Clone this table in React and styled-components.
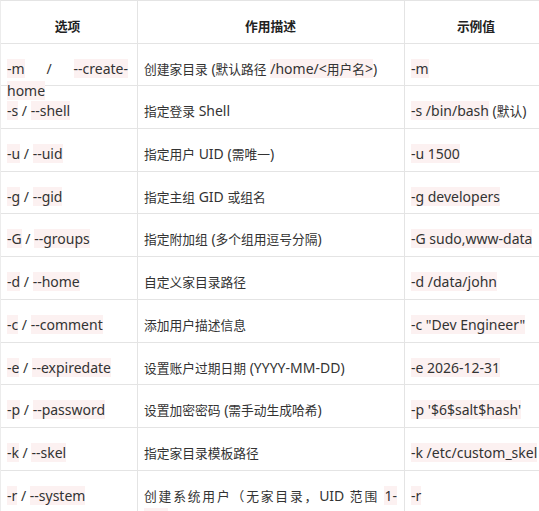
import React from "react";
import styled, { createGlobalStyle } from "styled-components";

const Global = createGlobalStyle`
  html, body { margin: 0; padding: 0; background: #fff; }
  body {
    font-family: "Noto Sans", "Noto Sans CJK SC", sans-serif;
    color: #333;
    overflow: hidden;
  }
`;

const Table = styled.div`
  display: grid;
  grid-template-columns: 137px 267px 136px;
  grid-auto-rows: 42.7px;
  width: 540px;
  border-top: 1px solid #e4e4e4;
  border-left: 1px solid #ececec;
  box-sizing: border-box;
`;

const padRight = ["9px", "7px", "0"];

const Cell = styled.div`
  box-sizing: border-box;
  padding: 14px ${(p) => padRight[p.$col]} 0 6px;
  font-size: 14px;
  line-height: 22px;
  border-bottom: 1px solid #e4e4e4;
  border-right: ${(p) => (p.$col === 2 ? "none" : "1px solid #e4e4e4")};
  text-align: ${(p) => (p.$head ? "center" : "justify")};
  font-weight: ${(p) => (p.$head ? 700 : 400)};
  color: ${(p) => (p.$head ? "#222" : "#333")};
  overflow: visible;
  min-width: 0;
`;

const Han = styled.span`
  font-family: "Noto Sans CJK SC", sans-serif;
  font-size: 12.75px;
`;

const Code = styled.span`
  background: #fcf1f1;
`;

const HAN_RE = /([\u3000-\u303f\u4e00-\u9fff\uff00-\uffef]+)/;

const splitHan = (s, key) =>
  s.split(HAN_RE).map((p, i) =>
    i % 2 === 1 ? (
      <Han key={key + "-" + i}>{p}</Han>
    ) : (
      <React.Fragment key={key + "-" + i}>{p}</React.Fragment>
    )
  );

const renderSeg = (seg, i) => {
  if (typeof seg === "string") return splitHan(seg, "t" + i);
  if (seg.wbr) return <wbr key={"w" + i} />;
  return <Code key={"c" + i}>{splitHan(seg.c, "c" + i)}</Code>;
};

const c = (s) => ({ c: s });
const opt = (a, b) => [c(a), " / ", c(b)];

const rows = [
  [opt("-m", "--create-home"), ["创建家目录 (默认路径 ", c("/home/<用户名>"), ")"], [c("-m")]],
  [opt("-s", "--shell"), ["指定登录 Shell"], [c("-s /bin/bash"), " (默认)"]],
  [opt("-u", "--uid"), ["指定用户 UID (需唯一)"], [c("-u 1500")]],
  [opt("-g", "--gid"), ["指定主组 GID 或组名"], [c("-g developers")]],
  [opt("-G", "--groups"), ["指定附加组 (多个组用逗号分隔)"], [c("-G sudo,www-data")]],
  [opt("-d", "--home"), ["自定义家目录路径"], [c("-d /data/john")]],
  [opt("-c", "--comment"), ["添加用户描述信息"], [c('-c "Dev Engineer"')]],
  [opt("-e", "--expiredate"), ["设置账户过期日期 (YYYY-MM-DD)"], [c("-e 2026-12-31")]],
  [opt("-p", "--password"), ["设置加密密码 (需手动生成哈希)"], [c("-p '$6$salt$hash'")]],
  [opt("-k", "--skel"), ["指定家目录模板路径"], [c("-k /etc/custom_skel")]],
  [
    opt("-r", "--system"),
    ["创建系统用户（无家目录，UID 范围 ", c("1-"), { wbr: true }, c("999"), "）"],
    [c("-r")],
  ],
];

const headers = ["选项", "作用描述", "示例值"];

export default function App() {
  return (
    <>
      <Global />
      <Table>
        {headers.map((h, i) => (
          <Cell key={"h" + i} $head $col={i}>
            {splitHan(h, "h" + i)}
          </Cell>
        ))}
        {rows.map((r, ri) =>
          r.map((cell, ci) => (
            <Cell key={ri + "-" + ci} $col={ci}>
              {cell.map(renderSeg)}
            </Cell>
          ))
        )}
      </Table>
    </>
  );
}
